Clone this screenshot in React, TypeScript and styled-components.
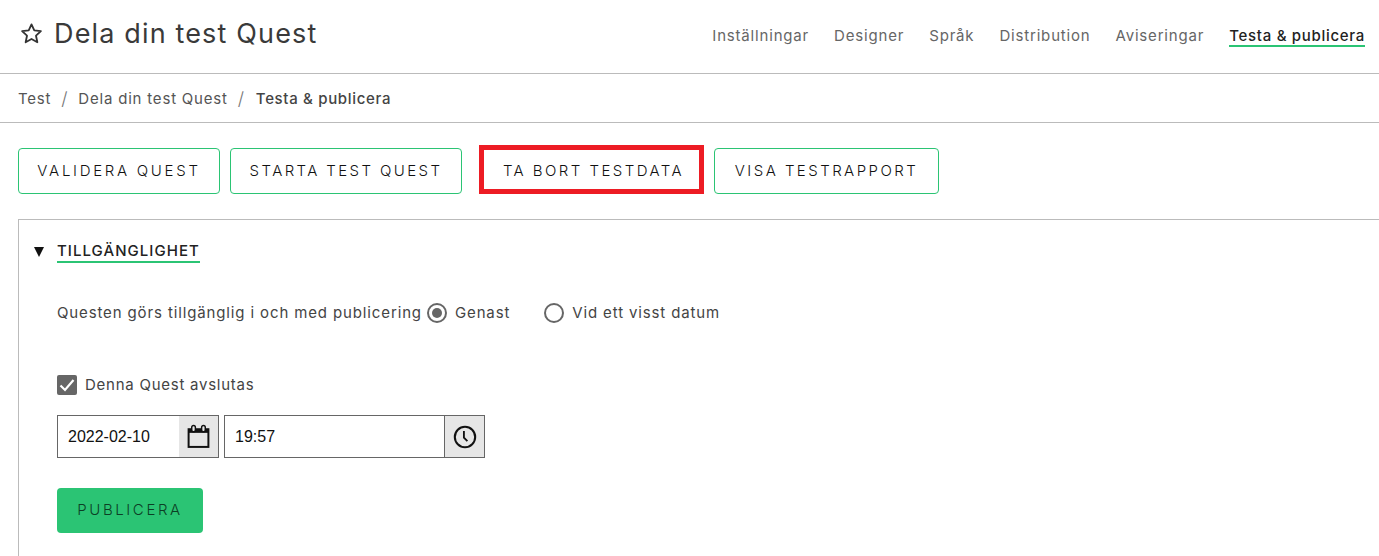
import styled, { createGlobalStyle } from "styled-components";

const GlobalStyle = createGlobalStyle`
  html, body {
    margin: 0;
    padding: 0;
    background: #fff;
    overflow: hidden;
  }
  body {
    font-family: "Inter", "Liberation Sans", sans-serif;
    color: #444;
  }
`;

const Page = styled.div`
  width: 1379px;
  height: 556px;
  overflow: hidden;
`;

const TopBar = styled.header`
  height: 74px;
  box-sizing: border-box;
  border-bottom: 1px solid #bbb;
  display: flex;
  justify-content: space-between;
  align-items: flex-start;
  padding: 0 14px 0 20px;
`;

const TitleRow = styled.div`
  display: flex;
  align-items: center;
  gap: 11px;
  height: 67px;
`;

const Title = styled.h1`
  margin: 0;
  font-size: 27px;
  font-weight: 400;
  letter-spacing: 1.15px;
  color: #3a3a3a;
`;

const Tabs = styled.nav`
  display: flex;
  gap: 25px;
  padding-top: 27px;
`;

const Tab = styled.a<{ $active?: boolean }>`
  font-size: 15px;
  line-height: 18px;
  letter-spacing: ${(p) => (p.$active ? "0.7px" : "0.82px")};
  color: ${(p) => (p.$active ? "#222" : "#666")};
  font-weight: ${(p) => (p.$active ? 500 : 400)};
  border-bottom: 2px solid ${(p) => (p.$active ? "#2bc474" : "transparent")};
`;

const Crumbs = styled.div`
  height: 49px;
  box-sizing: border-box;
  border-bottom: 1px solid #bbb;
  display: flex;
  align-items: center;
  padding: 0 18px;
  font-size: 15px;
  letter-spacing: 0.8px;
  color: #555;
`;

const Slash = styled.span`
  margin: 0 10px;
  font-size: 18px;
  font-weight: 300;
  color: #777;
`;

const CurrentCrumb = styled.span`
  margin-left: 1px;
  font-weight: 500;
  letter-spacing: 0.67px;
  color: #444;
`;

const Actions = styled.div`
  display: flex;
  align-items: flex-end;
  gap: 10px;
  padding: 25px 18px;
  height: 46px;
`;

const ActionButton = styled.button<{ $w: number; $spacing: number }>`
  width: ${(p) => p.$w}px;
  height: 46px;
  box-sizing: border-box;
  background: #fff;
  border: 1px solid #2bc474;
  border-radius: 4px;
  font-family: inherit;
  font-size: 15px;
  font-weight: 300;
  letter-spacing: ${(p) => p.$spacing}px;
  color: #111;
  padding: 0 0 2px;
`;

const MarkedButton = styled(ActionButton)`
  height: 49px;
  border: 5px solid #ed1c24;
  border-radius: 0;
  margin-left: 7px;
  padding: 1px 0 0 4px;
`;

const Panel = styled.section`
  margin-left: 18px;
  border-top: 1px solid #bbb;
  border-left: 1px solid #bbb;
  height: 340px;
  padding: 21px 0 0 15px;
`;

const SectionHead = styled.div`
  display: flex;
  align-items: center;
  gap: 13px;
`;

const Caret = styled.span`
  width: 0;
  height: 0;
  border-left: 5.5px solid transparent;
  border-right: 5.5px solid transparent;
  border-top: 10px solid #111;
`;

const SectionTitle = styled.h2`
  margin: 0;
  font-size: 15px;
  line-height: 20px;
  font-weight: 500;
  letter-spacing: 1.05px;
  color: #222;
  border-bottom: 2px solid #2bc474;
`;

const Body = styled.div`
  padding: 38px 0 0 23px;
`;

const RadioRow = styled.div`
  display: flex;
  align-items: center;
  font-size: 15px;
  line-height: 24px;
  letter-spacing: 0.87px;
  color: #444;
`;

const Radio = styled.span<{ $on?: boolean }>`
  width: 20px;
  height: 20px;
  box-sizing: border-box;
  border-radius: 50%;
  border: 2px solid #666;
  margin: 0 8px 0 5px;
  display: flex;
  align-items: center;
  justify-content: center;
  &::after {
    content: "";
    width: 10px;
    height: 10px;
    border-radius: 50%;
    background: ${(p) => (p.$on ? "#666" : "transparent")};
  }
`;

const SecondRadio = styled(Radio)`
  margin-left: 34px;
`;

const CheckRow = styled.label`
  display: flex;
  align-items: center;
  gap: 8px;
  margin-top: 50px;
  font-size: 15px;
  line-height: 20px;
  letter-spacing: 0.75px;
  color: #444;
`;

const CheckBox = styled.span`
  width: 20px;
  height: 20px;
  background: #666;
  border-radius: 2px;
  display: flex;
  align-items: center;
  justify-content: center;
`;

const Fields = styled.div`
  display: flex;
  gap: 5px;
  margin-top: 20px;
`;

const Field = styled.div<{ $w: number }>`
  width: ${(p) => p.$w}px;
  height: 43px;
  box-sizing: border-box;
  border: 1px solid #666;
  display: flex;
`;

const FieldValue = styled.span`
  flex: 1;
  padding-left: 10px;
  font-family: "Liberation Sans", Arial, sans-serif;
  font-size: 16px;
  line-height: 41px;
  color: #111;
`;

const FieldAddon = styled.span<{ $divided?: boolean }>`
  width: 39px;
  background: #e6e6e6;
  border-left: ${(p) => (p.$divided ? "1px solid #666" : "0")};
  display: flex;
  align-items: center;
  justify-content: center;
`;

const PublishButton = styled.button`
  display: block;
  margin-top: 30px;
  width: 146px;
  height: 45px;
  background: #2bc474;
  border: 0;
  border-radius: 4px;
  font-family: inherit;
  font-size: 15px;
  font-weight: 300;
  letter-spacing: 2.6px;
  color: #0c3f25;
  padding: 0 0 2px;
`;

function StarIcon() {
  return (
    <svg width="23" height="23" viewBox="0 0 24 24" fill="none" stroke="#333" strokeWidth="1.9" strokeLinejoin="round">
      <path d="M12 2.5l2.9 6.3 6.9.8-5.1 4.7 1.4 6.8-6.1-3.4-6.1 3.4 1.4-6.8-5.1-4.7 6.9-.8z" />
    </svg>
  );
}

function CheckIcon() {
  return (
    <svg width="18" height="18" viewBox="0 0 18 18" fill="none" stroke="#fff" strokeWidth="2.2">
      <path d="M2.5 9.5l4.5 4.5 8.5-10" />
    </svg>
  );
}

function CalendarIcon() {
  return (
    <svg width="25" height="25" viewBox="0 0 24 24">
      <rect x="2.5" y="5" width="19" height="17" fill="none" stroke="#111" strokeWidth="1.9" />
      <rect x="2.5" y="5" width="19" height="3.5" fill="#111" />
      <rect x="5.5" y="1.5" width="3.5" height="6" rx="1.7" fill="#e6e6e6" stroke="#111" strokeWidth="1.4" />
      <rect x="15" y="1.5" width="3.5" height="6" rx="1.7" fill="#e6e6e6" stroke="#111" strokeWidth="1.4" />
    </svg>
  );
}

function ClockIcon() {
  return (
    <svg width="26" height="26" viewBox="0 0 24 24" fill="none" stroke="#111" strokeWidth="1.9">
      <circle cx="12" cy="12" r="9.4" />
      <path d="M11 6.5v6l3.2 3.4" strokeWidth="1.7" />
    </svg>
  );
}

const tabs = ["Inställningar", "Designer", "Språk", "Distribution", "Aviseringar"];

export default function App() {
  return (
    <Page>
      <GlobalStyle />
      <TopBar>
        <TitleRow>
          <StarIcon />
          <Title>Dela din test Quest</Title>
        </TitleRow>
        <Tabs>
          {tabs.map((t) => (
            <Tab key={t}>{t}</Tab>
          ))}
          <Tab $active>Testa &amp; publicera</Tab>
        </Tabs>
      </TopBar>
      <Crumbs>
        Test
        <Slash>/</Slash>
        Dela din test Quest
        <Slash>/</Slash>
        <CurrentCrumb>Testa &amp; publicera</CurrentCrumb>
      </Crumbs>
      <Actions>
        <ActionButton $w={202} $spacing={2.7}>VALIDERA QUEST</ActionButton>
        <ActionButton $w={232} $spacing={2.4}>STARTA TEST QUEST</ActionButton>
        <MarkedButton $w={225} $spacing={2.45}>TA BORT TESTDATA</MarkedButton>
        <ActionButton $w={225} $spacing={2.45}>VISA TESTRAPPORT</ActionButton>
      </Actions>
      <Panel>
        <SectionHead>
          <Caret />
          <SectionTitle>TILLGÄNGLIGHET</SectionTitle>
        </SectionHead>
        <Body>
          <RadioRow>
            Questen görs tillgänglig i och med publicering
            <Radio $on />
            Genast
            <SecondRadio />
            Vid ett visst datum
          </RadioRow>
          <CheckRow>
            <CheckBox>
              <CheckIcon />
            </CheckBox>
            Denna Quest avslutas
          </CheckRow>
          <Fields>
            <Field $w={162}>
              <FieldValue>2022-02-10</FieldValue>
              <FieldAddon>
                <CalendarIcon />
              </FieldAddon>
            </Field>
            <Field $w={261}>
              <FieldValue>19:57</FieldValue>
              <FieldAddon $divided>
                <ClockIcon />
              </FieldAddon>
            </Field>
          </Fields>
          <PublishButton>PUBLICERA</PublishButton>
        </Body>
      </Panel>
    </Page>
  );
}
